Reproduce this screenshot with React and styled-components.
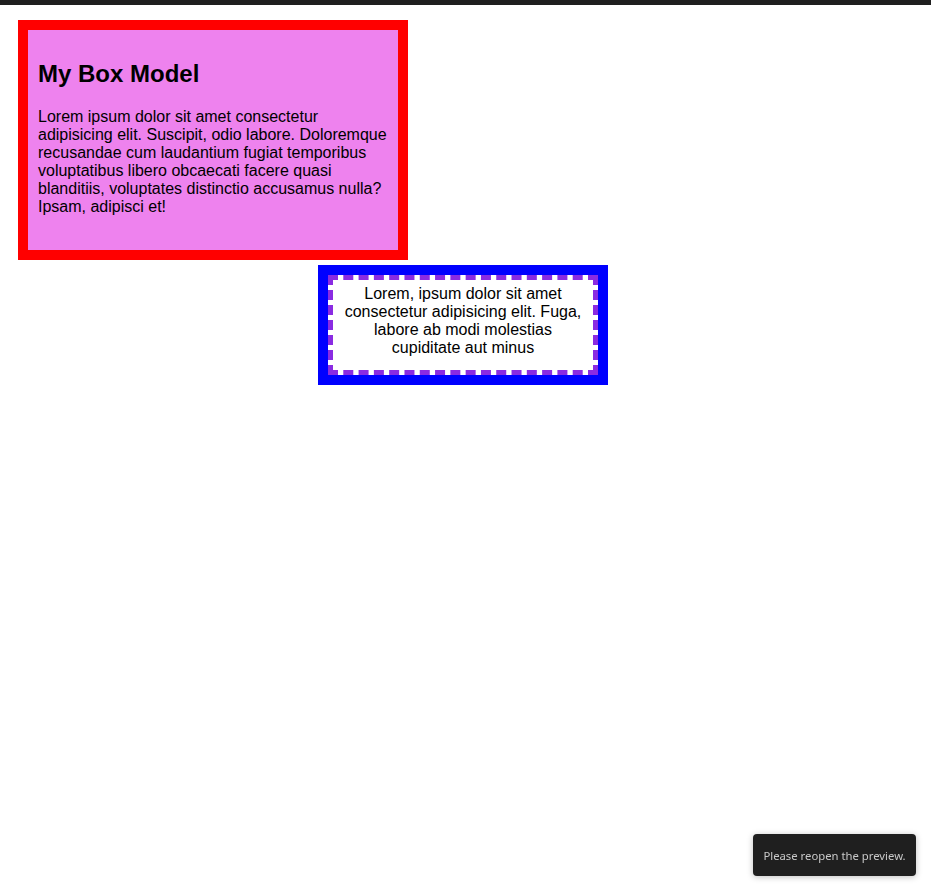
import React from 'react';
import styled, { createGlobalStyle } from 'styled-components';

const GlobalStyle = createGlobalStyle`
  body {
    margin: 0;
    background: #fff;
    font-family: "Liberation Sans", Arial, sans-serif;
    color: #000;
  }
`;

const App = () => {
  return (
    <>
      <GlobalStyle />
      <TopBar />
      <Page>
        <BoxModel>
          <h2>My Box Model</h2>
          <p>
            Lorem ipsum dolor sit amet consectetur adipisicing elit. Suscipit, odio labore. Doloremque
            recusandae cum laudantium fugiat temporibus voluptatibus libero obcaecati facere quasi
            blanditiis, voluptates distinctio accusamus nulla? Ipsam, adipisci et!
          </p>
        </BoxModel>
        <DashedBox>
          Lorem, ipsum dolor sit amet consectetur adipisicing elit. Fuga, labore ab modi molestias
          cupiditate aut minus
        </DashedBox>
      </Page>
      <Toast>Please reopen the preview.</Toast>
    </>
  );
};

export default App;

const TopBar = styled.div`
  height: 5px;
  background: #1f1f1f;
`;

const Page = styled.div`
  padding: 15px 18px;
  display: flex;
  flex-direction: column;
  align-items: flex-start;
`;

const BoxModel = styled.div`
  width: 350px;
  height: 200px;
  padding: 10px;
  border: 10px solid red;
  background: violet;
  h2 {
    margin: 20px 0;
    font-size: 24px;
    font-weight: 700;
  }
  p {
    margin: 0;
    font-size: 16px;
    line-height: 18px;
  }
`;

const DashedBox = styled.div`
  box-sizing: border-box;
  width: 270px;
  height: 100px;
  margin: 15px 0 0 310px;
  padding: 5px 10px;
  border: 5px dashed blueviolet;
  outline: 10px solid blue;
  background: #fff;
  text-align: center;
  font-size: 16px;
  line-height: 18px;
`;

const Toast = styled.div`
  position: fixed;
  right: 15px;
  bottom: 14px;
  width: 163px;
  height: 42px;
  box-sizing: border-box;
  display: flex;
  align-items: center;
  justify-content: center;
  background: #1f1f1f;
  border-radius: 4px;
  box-shadow: 0 1px 6px rgba(0, 0, 0, 0.25);
  color: #c8c8c8;
  font-family: "Noto Sans", "Open Sans", sans-serif;
  font-size: 11.3px;
`;
